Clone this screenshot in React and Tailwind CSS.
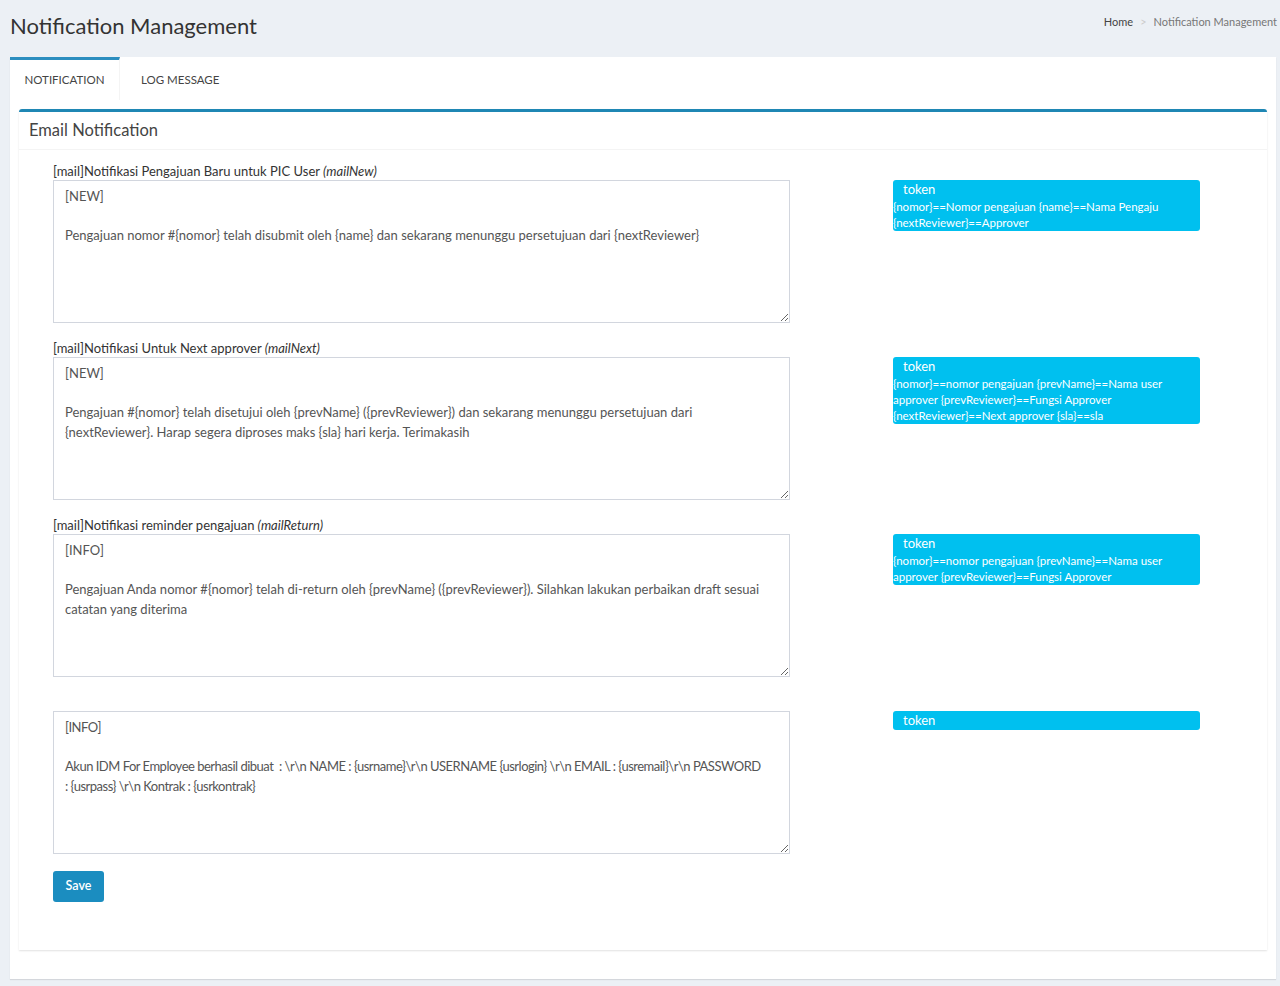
const rows = [
  {
    label: "[mail]Notifikasi Pengajuan Baru untuk PIC User",
    key: "mailNew",
    value:
      "[NEW]\n\nPengajuan nomor #{nomor} telah disubmit oleh {name} dan sekarang menunggu persetujuan dari {nextReviewer}",
    tokens: "{nomor}==Nomor pengajuan {name}==Nama Pengaju {nextReviewer}==Approver",
  },
  {
    label: "[mail]Notifikasi Untuk Next approver",
    key: "mailNext",
    value:
      "[NEW]\n\nPengajuan #{nomor} telah disetujui oleh {prevName} ({prevReviewer}) dan sekarang menunggu persetujuan dari {nextReviewer}. Harap segera diproses maks {sla} hari kerja. Terimakasih",
    tokens:
      "{nomor}==nomor pengajuan {prevName}==Nama user approver {prevReviewer}==Fungsi Approver {nextReviewer}==Next approver {sla}==sla",
  },
  {
    label: "[mail]Notifikasi reminder pengajuan",
    key: "mailReturn",
    value:
      "[INFO]\n\nPengajuan Anda nomor #{nomor} telah di-return oleh {prevName} ({prevReviewer}). Silahkan lakukan perbaikan draft sesuai catatan yang diterima",
    tokens: "{nomor}==nomor pengajuan {prevName}==Nama user approver {prevReviewer}==Fungsi Approver",
  },
  {
    label: "",
    key: "",
    tight: true,
    value:
      "[INFO]\n\nAkun IDM For Employee berhasil dibuat  : \\r\\n NAME : {usrname}\\r\\n USERNAME {usrlogin} \\r\\n EMAIL : {usremail}\\r\\n PASSWORD : {usrpass} \\r\\n Kontrak : {usrkontrak}",
    tokens: "",
  },
];

function NotifRow({ row }) {
  return (
    <div className="flex mb-[17px]">
      <div className="w-[737px]">
        <div className="h-[17px] leading-[17px] text-[13px] text-[#333] whitespace-nowrap">
          {row.label}
          {row.key && <i> ({row.key})</i>}
        </div>
        <textarea
          defaultValue={row.value}
          className={
            "block w-[737px] h-[143px] border border-[#d2d6de] pl-[11px] py-[6px] text-[13px] leading-[19.5px] text-[#555] outline-none" +
            (row.tight ? " tracking-[-0.5px] pr-[23px]" : " pr-[11px]")
          }
        />
      </div>
      <div className="ml-[103px] mt-[17px] w-[307px] self-start bg-[#00c0ef] rounded-[3px] text-white">
        <div className="pl-[10px] h-[19px] leading-[19px] text-[13px]">token</div>
        {row.tokens && <div className="text-[11.5px] leading-[16px]">{row.tokens}</div>}
      </div>
    </div>
  );
}

export default function App() {
  return (
    <div className="min-h-[986px] bg-[#ecf0f5] font-['Lato',sans-serif]">
      <div className="flex justify-between h-[57px] pl-[10px] pr-[3px]">
        <h1 className="pt-[12px] text-[22px] leading-[28px] text-[#333]">Notification Management</h1>
        <div className="pt-[14px] text-[11px] leading-[16px]">
          <span className="text-[#444]">Home</span>
          <span className="text-[#ccc] px-[7px]">&gt;</span>
          <span className="text-[#777]">Notification Management</span>
        </div>
      </div>

      <div className="ml-[10px] mr-[4px] bg-white shadow-[0_1px_1px_rgba(0,0,0,0.1)]">
        <div className="flex h-[43px]">
          <div className="w-[110px] border-t-[3px] border-[#2c8ebf] border-r border-r-[#f4f4f4] flex items-center justify-center text-[11.5px] text-[#444]">
            NOTIFICATION
          </div>
          <div className="ml-[6px] px-[15px] pt-[3px] flex items-center text-[11.5px] text-[#444]">LOG MESSAGE</div>
        </div>

        <div className="pt-[9px] px-[9px] pb-[29px]">
          <div className="border-t-[3px] border-[#1f87b4] rounded-t-[3px] shadow-[0_1px_2px_rgba(0,0,0,0.12)]">
            <div className="h-[38px] border-b border-[#f4f4f4] pl-[10px] flex items-center text-[16.5px] text-[#444]">
              Email Notification
            </div>
            <div className="pt-[13px] pl-[34px] pb-[48px]">
              {rows.map((r, i) => (
                <NotifRow key={i} row={r} />
              ))}
              <button className="w-[51px] h-[31px] rounded-[3px] bg-[#1b8dc0] text-white text-[12.5px] font-semibold">
                Save
              </button>
            </div>
          </div>
        </div>
      </div>
    </div>
  );
}
